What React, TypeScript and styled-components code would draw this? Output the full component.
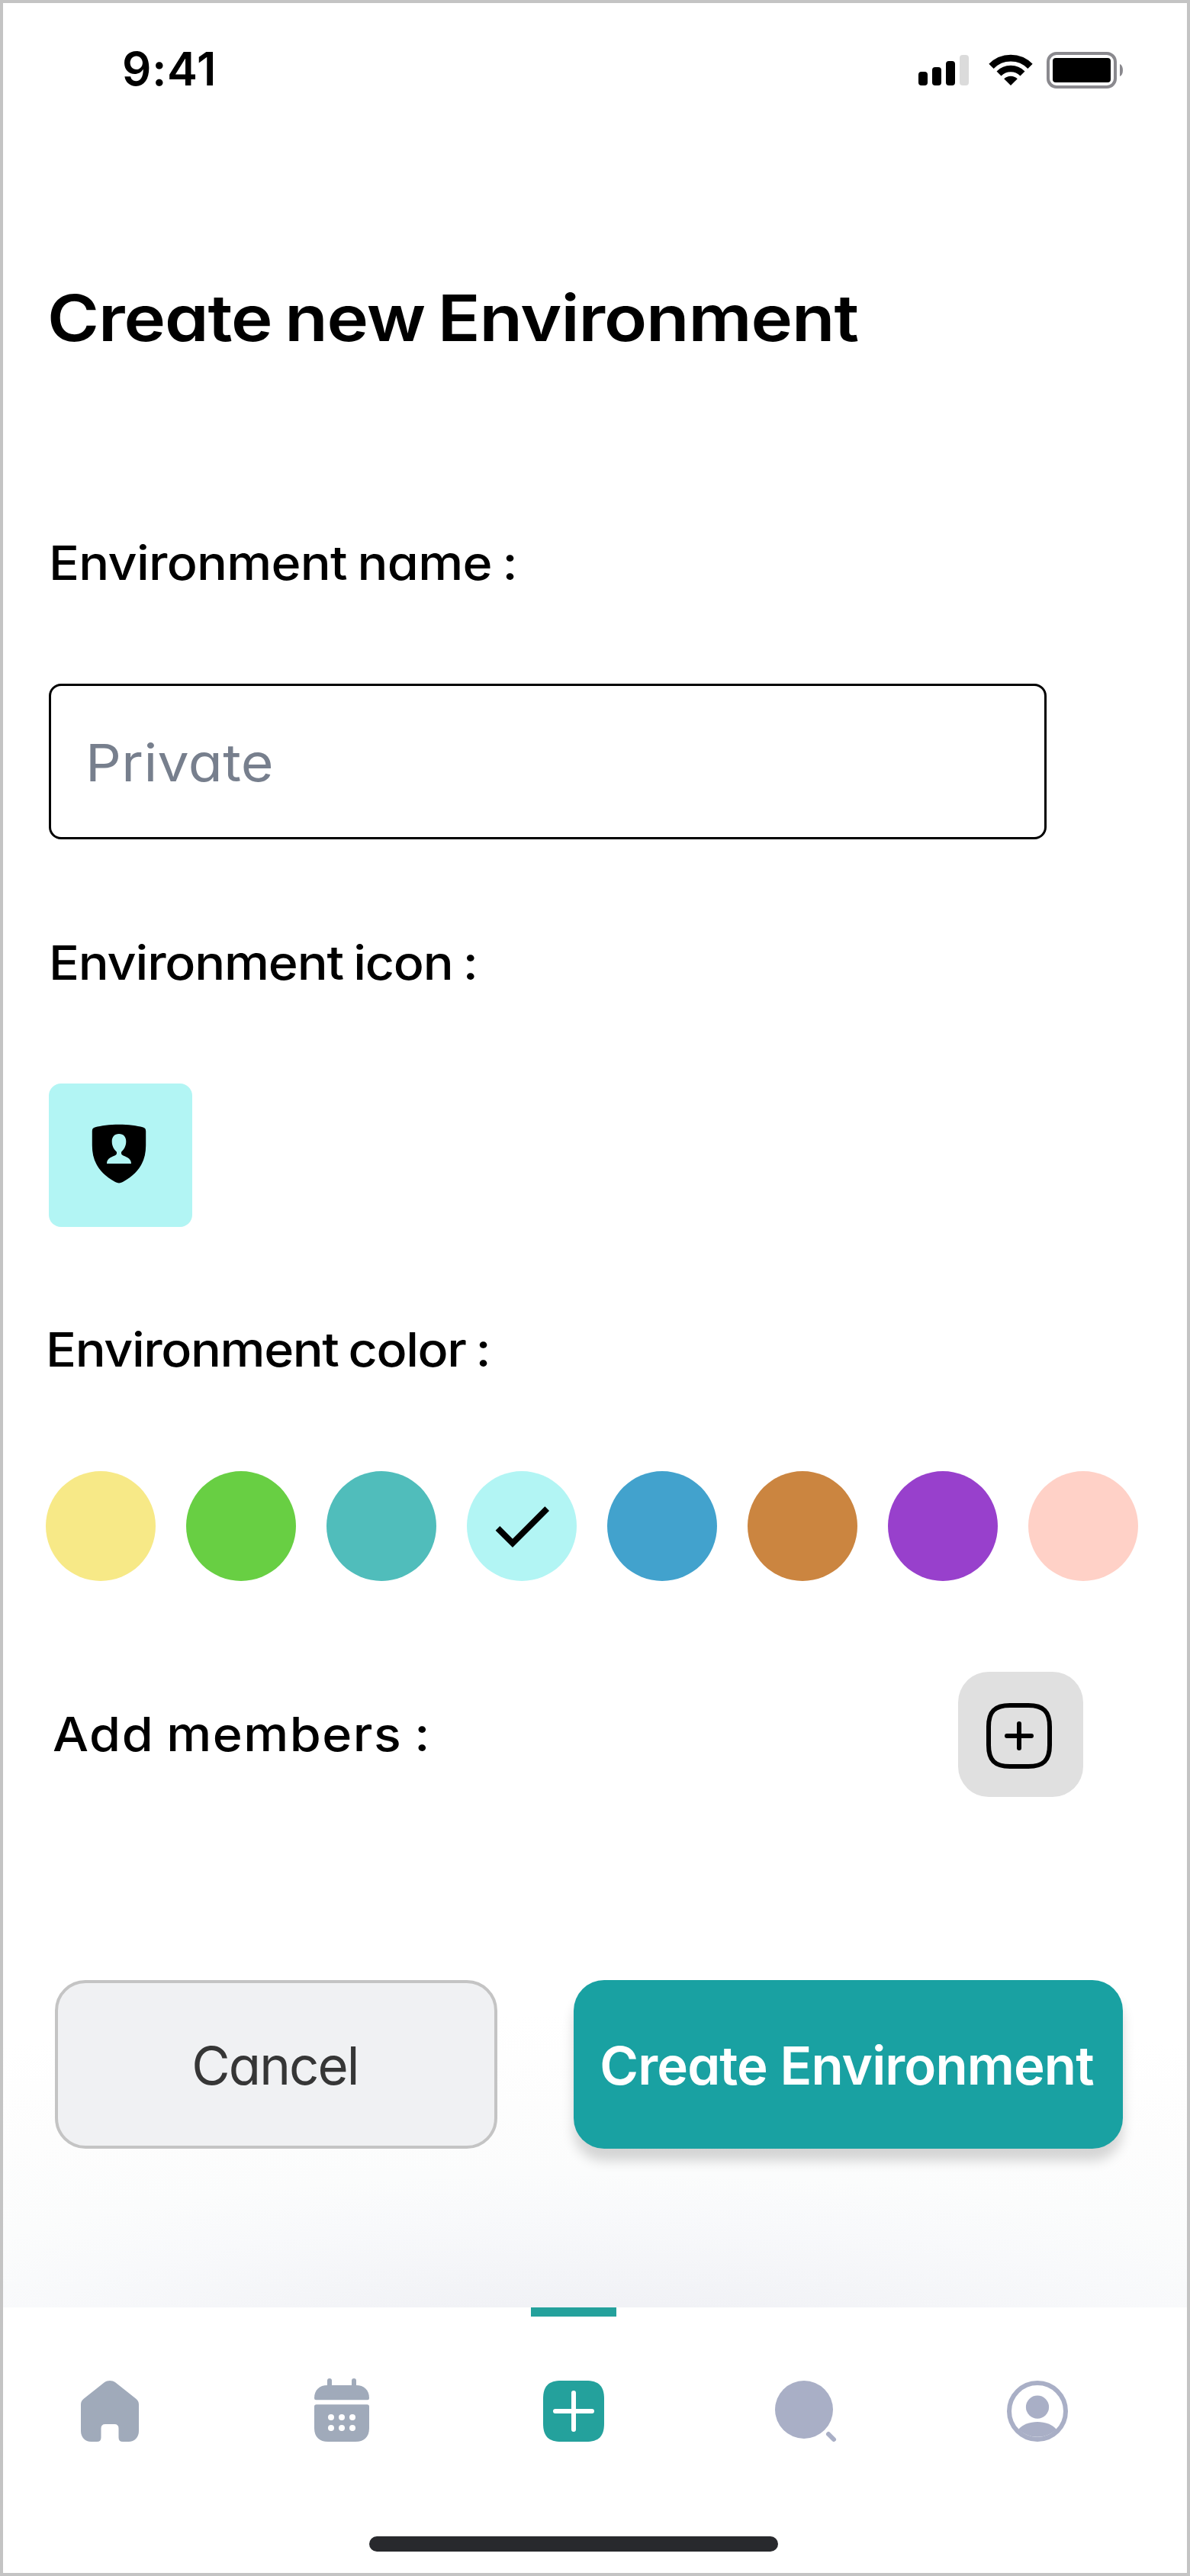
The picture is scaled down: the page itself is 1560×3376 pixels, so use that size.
import React from "react";
import styled, { createGlobalStyle } from "styled-components";

const GlobalStyle = createGlobalStyle`
  *, *::before, *::after { box-sizing: border-box; }
  body { margin: 0; background: #fff; }
  button { font: inherit; margin: 0; padding: 0; border: 0; background: none; cursor: pointer; }
  svg { display: block; overflow: visible; }
`;

const Screen = styled.div`
  display: flex;
  flex-direction: column;
  width: 1560px;
  height: 3376px;
  border: 4px solid #c4c4c4;
  background: #fff;
  color: #000;
  font-family: "Inter", "Liberation Sans", sans-serif;
  font-feature-settings: "cv11";
`;

const StatusBar = styled.header`
  display: flex;
  justify-content: space-between;
  align-items: flex-start;
  height: 180px;
  padding: 55.5px 84px 0 156px;
`;

const Clock = styled.time`
  font-size: 60px;
  line-height: 60px;
  font-weight: 600;
  letter-spacing: 0.8px;
  font-feature-settings: "calt" 0;
`;

const StatusIcons = styled.div`
  display: flex;
  align-items: center;
  height: 48px;
  margin-top: 8.5px;
`;

const Wifi = styled.svg`
  margin: 0 18.5px 0 25.5px;
`;

const Form = styled.main`
  flex: 1;
  display: flex;
  flex-direction: column;
  align-items: flex-start;
  padding: 183.4px 60px 0;
  background: radial-gradient(
    ellipse 1900px 460px at 50% 2916px,
    #f1f2f6 0%,
    #f1f2f6 18%,
    #f4f5f8 28%,
    #f8f9fb 42%,
    #fbfcfc 55%,
    #fdfdfd 75%,
    #ffffff 100%
  );
`;

const Title = styled.h1`
  margin: 0 0 230.2px -1.8px;
  font-size: 84px;
  line-height: 100px;
  font-weight: 600;
  letter-spacing: -1px;
  word-spacing: -5px;
  white-space: nowrap;
  transform: scaleX(1.099);
  transform-origin: left;
`;

const Label = styled.label<{ $tracking: number; $shift?: number }>`
  margin-left: ${(p) => p.$shift ?? 0}px;
  font-size: 61.5px;
  line-height: 80px;
  font-weight: 500;
  letter-spacing: ${(p) => p.$tracking}px;
  word-spacing: -3px;
  white-space: nowrap;
  transform: scaleX(1.08);
  transform-origin: left;
`;

const NameField = styled.div`
  display: flex;
  align-items: center;
  width: 1308px;
  height: 204px;
  margin: 118.4px 0 121.6px;
  padding: 2px 45px 0;
  border: 3px solid #000;
  border-radius: 16px;
  background: #fff;
`;

const NameValue = styled.span`
  color: #777f8d;
  font-size: 68px;
  line-height: 84px;
  letter-spacing: 0.35px;
  transform: scaleX(1.08);
  transform-origin: left;
`;

const IconTile = styled.button`
  display: grid;
  place-items: center;
  width: 188px;
  height: 188px;
  margin: 118.4px 0 121.1px;
  border-radius: 16px;
  background: #b2f5f4;
`;

const Swatches = styled.div`
  display: flex;
  gap: 40px;
  margin: 118.5px 0 119.8px -4px;
`;

const Swatch = styled.button<{ $color: string }>`
  display: grid;
  place-items: center;
  width: 144px;
  height: 144px;
  border-radius: 50%;
  background: ${(p) => p.$color};
`;

const MembersRow = styled.div`
  display: flex;
  align-items: center;
  justify-content: space-between;
  width: 1356px;
`;

const AddButton = styled.button`
  display: grid;
  place-items: center;
  width: 164px;
  height: 164px;
  padding: 4px 4px 0 0;
  border-radius: 40px;
  background: #e0e0e0;
`;

const Actions = styled.div`
  display: flex;
  gap: 100px;
  margin: 240px 0 0 8px;
`;

const ActionButton = styled.button`
  height: 220.4px;
  border-radius: 40px;
  font-size: 69px;
  line-height: 84px;
  white-space: nowrap;
`;

const CancelButton = styled(ActionButton)`
  width: 580px;
  padding: 2px 3px 0 0;
  border: 4px solid #c4c4c4;
  background: #f0f1f3;
  color: #363636;
  font-weight: 400;
  letter-spacing: -1.9px;
`;

const CreateButton = styled(ActionButton)`
  width: 720px;
  padding: 2px 4px 0 0;
  background: #19a1a2;
  color: #fff;
  font-weight: 600;
  letter-spacing: -0.9px;
  box-shadow: 0 16px 16px rgba(0, 0, 0, 0.16);
`;

const TabBar = styled.nav`
  display: flex;
  flex-direction: column;
  justify-content: space-between;
  height: 348px;
  padding-bottom: 28px;
  background: #fff;
`;

const Tabs = styled.div`
  display: flex;
  gap: 224px;
  padding-left: 100px;
`;

const Tab = styled.button<{ $active?: boolean }>`
  position: relative;
  width: 80px;
  padding-top: 96px;
  color: ${(p) => (p.$active ? "#24a19c" : "#a0aaba")};

  &::before {
    content: "";
    display: ${(p) => (p.$active ? "block" : "none")};
    position: absolute;
    top: 0;
    left: -16px;
    width: 112px;
    height: 12px;
    background: #24a19c;
  }
`;

const HomeIndicator = styled.div`
  width: 536px;
  height: 20px;
  margin-left: 480px;
  border-radius: 10px;
  background: #28292d;
`;

const colors = ["#f7e987", "#68cf43", "#50bdbb", "#b2f5f4", "#42a2cd", "#cb8540", "#9840cc", "#ffd1c7"];

const SignalIcon = () => (
  <svg width="66" height="40" viewBox="0 0 66 40">
    <rect x="0" y="22" width="12" height="18" rx="4" />
    <rect x="18" y="16" width="12" height="24" rx="4" />
    <rect x="36" y="8" width="12" height="32" rx="4" />
    <rect x="54" y="0" width="12" height="40" rx="4" fill="#dbdbdb" />
  </svg>
);

const WifiIcon = () => (
  <Wifi width="58" height="40" viewBox="0 0 58 40" fill="none" stroke="#000">
    <path d="M3.5 14.9A35.6 35.6 0 0 1 54.5 14.9" strokeWidth="8.8" />
    <path d="M13.5 24.5A21.8 21.8 0 0 1 44.5 24.5" strokeWidth="8.4" />
    <path d="M29 40L20.2 31.3A12.5 12.5 0 0 1 37.8 31.3Z" fill="#000" stroke="none" />
  </Wifi>
);

const BatteryIcon = () => (
  <svg width="100" height="48" viewBox="0 0 100 48">
    <rect x="2" y="2" width="88" height="44" rx="11" fill="none" stroke="#8a898e" strokeWidth="4" />
    <rect x="8" y="8" width="76" height="32" rx="4" />
    <path d="M96 16C98.6 17 100 20 100 24S98.6 31 96 32Z" fill="#8a898e" />
  </svg>
);

const ShieldUserIcon = () => (
  <svg width="96" height="96" viewBox="0 1 96 96">
    <path
      fillRule="evenodd"
      d="M46 8.7C34 8.7 22 10.3 15 12.2C12 13 10.8 14.5 10.8 17.5V36C10.8 56 19 72 41 84Q46 86.8 51 84C73 72 81.2 56 81.2 36V17.5C81.2 14.5 80 13 77 12.2C70 10.3 58 8.7 46 8.7ZM46 21C40 21 36.7 25 36.7 31C36.7 37 39.5 41.5 42.8 44.5C43.3 46 43 47.5 42 48.5C38 51 30 52 30 60H62C62 52 54 51 50 48.5C49 47.5 48.7 46 49.2 44.5C52.5 41.5 55.3 37 55.3 31C55.3 25 52 21 46 21Z"
    />
  </svg>
);

const CheckIcon = () => (
  <svg width="96" height="96" viewBox="0 0 24 24">
    <path d="M9 16.17L4.83 12l-1.42 1.41L9 19 21 7l-1.41-1.41z" />
  </svg>
);

const AddSquareIcon = () => (
  <svg width="96" height="96" viewBox="0 0 24 24" fill="none" stroke="#000" strokeWidth="1.5" strokeLinecap="round" strokeLinejoin="round">
    <path d="M8 12h8M12 16V8M9 22h6c5 0 7-2 7-7V9c0-5-2-7-7-7H9C4 2 2 4 2 9v6c0 5 2 7 7 7z" />
  </svg>
);

const HomeIcon = () => (
  <svg width="80" height="80" viewBox="0 0 80 80" fill="currentColor">
    <path d="M32.8 2.3C37 -0.9 43 -0.9 47.2 2.3L74 23.5C76.8 25.8 78 28 78 31.5V66C78 74 72.5 80 64.5 80H57Q51.5 80 51.5 74.5V62.5Q51.5 57 46 57H34Q28.5 57 28.5 62.5V74.5Q28.5 80 23 80H15.5C7.5 80 2 74 2 66V31.5C2 28 3.2 25.8 6 23.5Z" />
  </svg>
);

const CalendarIcon = () => (
  <svg width="80" height="80" viewBox="0 0 80 80" fill="currentColor">
    <rect x="21" y="-3" width="6" height="18" rx="3" />
    <rect x="53" y="-3" width="6" height="18" rx="3" />
    <path d="M4 23C4 12 11 6 21 6H59C69 6 76 12 76 23Q76 25.3 73.7 25.3H6.3Q4 25.3 4 23Z" />
    <path d="M4 34Q4 31.2 6.8 31.2H73.2Q76 31.2 76 34V62C76 74 69 80 58 80H22C11 80 4 74 4 62Z" />
    {[48, 62].map((y) => [26, 40, 54].map((x) => <circle key={`${x}-${y}`} cx={x} cy={y} r="4" fill="#fff" />))}
  </svg>
);

const PlusIcon = () => (
  <svg width="80" height="80" viewBox="0 0 80 80">
    <path fill="currentColor" d="M0 24C0 7 7 0 24 0H56C73 0 80 7 80 24V56C80 73 73 80 56 80H24C7 80 0 73 0 56Z" />
    <path d="M16 40H64M40 16V64" stroke="#fff" strokeWidth="6" strokeLinecap="round" />
  </svg>
);

const SearchIcon = () => (
  <svg width="80" height="80" viewBox="0 0 80 80" fill="#a9afc6">
    <circle cx="38" cy="38" r="38" />
    <path d="M70 70L77 77" stroke="#a9afc6" strokeWidth="6" strokeLinecap="round" />
  </svg>
);

const ProfileIcon = () => (
  <svg width="80" height="80" viewBox="0 0 80 80" fill="#a9afc6">
    <circle cx="40" cy="40" r="37" fill="none" stroke="#a9afc6" strokeWidth="6" />
    <circle cx="40" cy="34.6" r="15.1" />
    <path d="M15 64C20 57.5 30 54 40 54S60 57.5 65 64A37 37 0 0 1 15 64Z" />
  </svg>
);

export default function App() {
  return (
    <>
      <GlobalStyle />
      <Screen>
        <StatusBar>
          <Clock>9:41</Clock>
          <StatusIcons>
            <SignalIcon />
            <WifiIcon />
            <BatteryIcon />
          </StatusIcons>
        </StatusBar>
        <Form>
          <Title>Create new Environment</Title>
          <Label $tracking={-0.68} as="div">Environment name :</Label>
          <NameField>
            <NameValue>Private</NameValue>
          </NameField>
          <Label $tracking={-1.1} as="div">Environment icon :</Label>
          <IconTile aria-label="Environment icon">
            <ShieldUserIcon />
          </IconTile>
          <Label $tracking={-1.3} $shift={-4} as="div">Environment color :</Label>
          <Swatches>
            {colors.map((color, i) => (
              <Swatch key={color} $color={color} aria-label={color}>
                {i === 3 && <CheckIcon />}
              </Swatch>
            ))}
          </Swatches>
          <MembersRow>
            <Label $tracking={1.4} $shift={5} as="div">Add members :</Label>
            <AddButton aria-label="Add members">
              <AddSquareIcon />
            </AddButton>
          </MembersRow>
          <Actions>
            <CancelButton>Cancel</CancelButton>
            <CreateButton>Create Environment</CreateButton>
          </Actions>
        </Form>
        <TabBar>
          <Tabs>
            <Tab aria-label="Home"><HomeIcon /></Tab>
            <Tab aria-label="Calendar"><CalendarIcon /></Tab>
            <Tab $active aria-label="Create"><PlusIcon /></Tab>
            <Tab aria-label="Search"><SearchIcon /></Tab>
            <Tab aria-label="Profile"><ProfileIcon /></Tab>
          </Tabs>
          <HomeIndicator />
        </TabBar>
      </Screen>
    </>
  );
}
